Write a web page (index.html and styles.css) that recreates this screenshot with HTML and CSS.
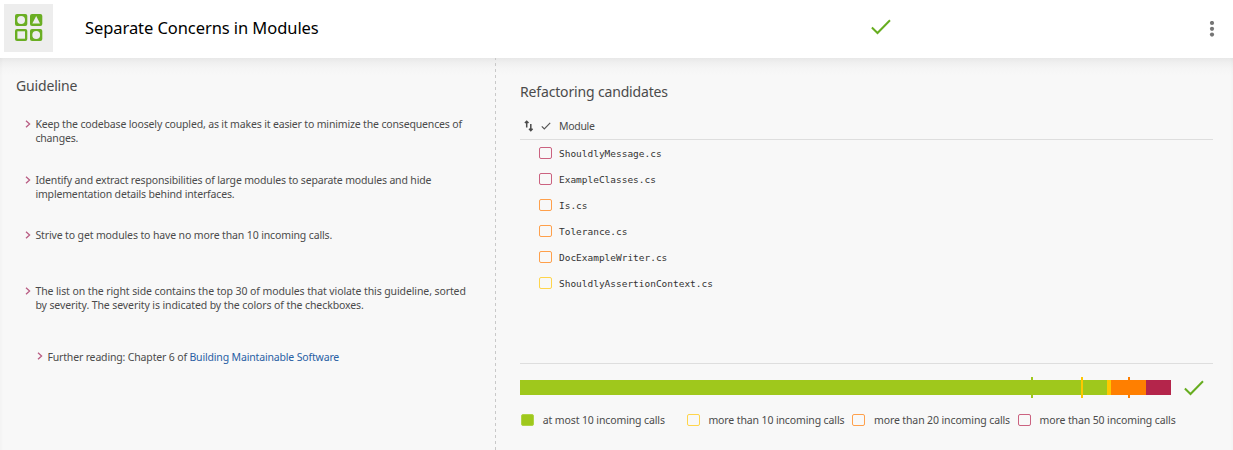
FILE: index.html
```html
<!DOCTYPE html>
<html lang="en">
<head>
<meta charset="utf-8">
<title>Separate Concerns in Modules</title>
<link rel="stylesheet" href="styles.css">
</head>
<body>
<svg class="defs" width="0" height="0" aria-hidden="true">
  <symbol id="chevron" viewBox="0 0 6 8"><path d="M1 .7 4.6 4 1 7.3" fill="none" stroke="#b95d83" stroke-width="1.3"/></symbol>
  <symbol id="check" viewBox="0 0 20 16"><path d="M.9 8.5 6.5 14 19 1.2" fill="none" stroke="currentColor" stroke-width="2"/></symbol>
</svg>
<header class="header">
  <div class="logo">
    <svg width="28" height="28" viewBox="0 0 28 28">
      <g fill="#6aae23"><rect x="0" y="0" width="12.3" height="12" rx="2"/><rect x="15" y="0" width="12.3" height="12" rx="2"/><rect x="0" y="15" width="12.3" height="12" rx="2"/><rect x="15" y="15" width="12.3" height="12" rx="2"/></g>
      <g fill="#ededed"><circle cx="6.1" cy="6" r="3.9"/><path d="M21.2 2 25 9.4h-7.7z"/><rect x="2.4" y="17.3" width="7.6" height="7.4"/><circle cx="21.2" cy="21" r="3.9"/></g>
    </svg>
  </div>
  <h1 class="title">Separate Concerns in Modules</h1>
  <svg class="header-check" width="20" height="16"><use href="#check"/></svg>
  <svg class="kebab" width="6" height="16" viewBox="0 0 6 16"><g fill="#757575"><circle cx="3" cy="2" r="2.1"/><circle cx="3" cy="7.8" r="2.1"/><circle cx="3" cy="13.6" r="2.1"/></g></svg>
</header>
<main class="panel">
  <section class="guideline">
    <h2 class="heading">Guideline</h2>
    <ul class="tips">
      <li class="tip"><svg class="chevron"><use href="#chevron"/></svg><p>Keep the codebase loosely coupled, as it makes it easier to minimize the consequences of<br>changes.</p></li>
      <li class="tip"><svg class="chevron"><use href="#chevron"/></svg><p>Identify and extract responsibilities of large modules to separate modules and hide<br>implementation details behind interfaces.</p></li>
      <li class="tip single"><svg class="chevron"><use href="#chevron"/></svg><p>Strive to get modules to have no more than 10 incoming calls.</p></li>
      <li class="tip sorted"><svg class="chevron"><use href="#chevron"/></svg><p>The list on the right side contains the top 30 of modules that violate this guideline, sorted<br>by severity. The severity is indicated by the colors of the checkboxes.</p></li>
      <li class="tip reading"><svg class="chevron"><use href="#chevron"/></svg><p>Further reading: Chapter 6 of <a class="link">Building Maintainable Software</a></p></li>
    </ul>
  </section>
  <svg class="divider" width="1" height="392"><path d="M.5 0V392" stroke="#c9c9c9" stroke-dasharray="3 3" stroke-dashoffset="1"/></svg>
  <section class="candidates">
    <h2 class="heading">Refactoring candidates</h2>
    <div class="table-head">
      <svg class="sort" width="10" height="12" viewBox="0 0 10 12"><path d="M2.7 7.5V1M.9 3 2.7 1.2 4.5 3M6.8 4v6.5M5 8.8l1.8 1.8 1.8-1.8" fill="none" stroke="#4b4b4b" stroke-width="1.5"/></svg>
      <svg class="head-check" width="10" height="8" viewBox="0 0 10 8"><path d="M.8 4.3 3.3 6.8 9.2.8" fill="none" stroke="#555" stroke-width="1.2"/></svg>
      <span class="col">Module</span>
    </div>
    <ul class="modules">
      <li><i class="box red"></i><span>ShouldlyMessage.cs</span></li>
      <li><i class="box red"></i><span>ExampleClasses.cs</span></li>
      <li><i class="box orange"></i><span>Is.cs</span></li>
      <li><i class="box orange"></i><span>Tolerance.cs</span></li>
      <li><i class="box orange"></i><span>DocExampleWriter.cs</span></li>
      <li><i class="box yellow"></i><span>ShouldlyAssertionContext.cs</span></li>
    </ul>
    <div class="summary">
      <svg class="bar" width="651" height="21" viewBox="0 0 651 21" shape-rendering="crispEdges">
        <path fill="#9fc81c" d="M0 3h587v15H0zM511 0h2v21h-2z"/>
        <path fill="#ffc800" d="M587 3h4v15h-4zM561 0h2v21h-2z"/>
        <path fill="#ff7f00" d="M591 3h35v15h-35zM608 0h2v21h-2z"/>
        <path fill="#b4254b" d="M626 3h25v15h-25z"/>
      </svg>
      <svg class="result" width="20" height="16"><use href="#check"/></svg>
    </div>
    <div class="legend">
      <div><i class="box green"></i><span>at most 10 incoming calls</span></div>
      <div><i class="box yellow"></i><span>more than 10 incoming calls</span></div>
      <div><i class="box orange"></i><span>more than 20 incoming calls</span></div>
      <div><i class="box red"></i><span>more than 50 incoming calls</span></div>
    </div>
  </section>
</main>
</body>
</html>
```
FILE: styles.css
```css
* { box-sizing: border-box; }
body { margin: 0; width: 1233px; height: 450px; overflow: hidden; background: #fff; color: #4b4b4b; font: 10.5px/14px "Noto Sans", sans-serif; letter-spacing: -.16px; }
h1, h2, p, ul { margin: 0; padding: 0; font-weight: normal; }
ul { list-style: none; }
svg { display: block; flex: none; }
.defs { position: absolute; }
.header { height: 58px; display: flex; align-items: center; padding-bottom: 2px; }
.logo { width: 49px; height: 48px; margin-left: 4px; background: #ededed; display: flex; align-items: center; padding: 0 0 0 11px; }
.title { width: 786px; margin-left: 32px; color: #000; font-size: 16.5px; letter-spacing: -.07px; line-height: 24px; white-space: nowrap; }
.header-check { color: #67ad20; margin: -2px 0 0; }
.kebab { margin-left: 318px; margin-top: 2px; }
.panel { height: 392px; display: flex; background: linear-gradient(#e8e8e8, #f0f0f0 5px, #f5f5f5 10px, #f8f8f8 17px); box-shadow: inset 5px 0 3px -3px rgba(0,0,0,.02), inset -5px 0 3px -3px rgba(0,0,0,.02); }
.guideline { width: 495px; padding: 18px 0 0 16px; }
.heading { font-size: 14px; line-height: 20px; letter-spacing: -.16px; white-space: nowrap; }
.tips { padding-top: 21px; }
.tip { display: flex; gap: 4.4px; height: 56px; padding-left: 9px; white-space: nowrap; }
.tip.single { letter-spacing: -.13px; margin-top: -1px; }
.tip.sorted { letter-spacing: -.1px; }
.chevron { width: 6px; height: 8px; margin-top: 3px; }
.tip.reading { padding-left: 21px; margin-top: 10px; }
.reading .chevron { margin-top: 2px; }
.link { color: #2860a4; }
.candidates { width: 693px; margin-left: 24px; padding-top: 24px; }
.table-head { display: flex; align-items: center; height: 38px; padding: 11px 0 0 4px; border-bottom: 1px solid #dedede; }
.head-check { margin-left: 7px; margin-top: 0; }
.col { margin-left: 8px; letter-spacing: -.3px; }
.modules { height: 223px; }
.modules li { display: flex; align-items: center; height: 26px; padding: 0 0 0 19px; gap: 7px; font: 9.47px/14px "DejaVu Sans Mono", monospace; letter-spacing: 0; color: #333; }
.modules span { padding-top: 2px; }
.box { width: 13px; height: 12px; border: 1px solid; border-radius: 2px; flex: none; }
.red { border-color: #cb6280; }
.orange { border-color: #ffa04b; }
.yellow { border-color: #ffd54b; }
.green { border-color: #b0d445; background: #9fc81c; }
.summary { display: flex; align-items: center; border-top: 1px solid #dedede; height: 47px; }
.result { color: #67ad20; margin-left: 13px; margin-top: 1px; }
.legend { display: flex; padding-top: 3px; white-space: nowrap; letter-spacing: -.12px; }
.legend div { display: flex; align-items: center; gap: 8.8px; width: 165.6px; padding-left: 1px; }
```
